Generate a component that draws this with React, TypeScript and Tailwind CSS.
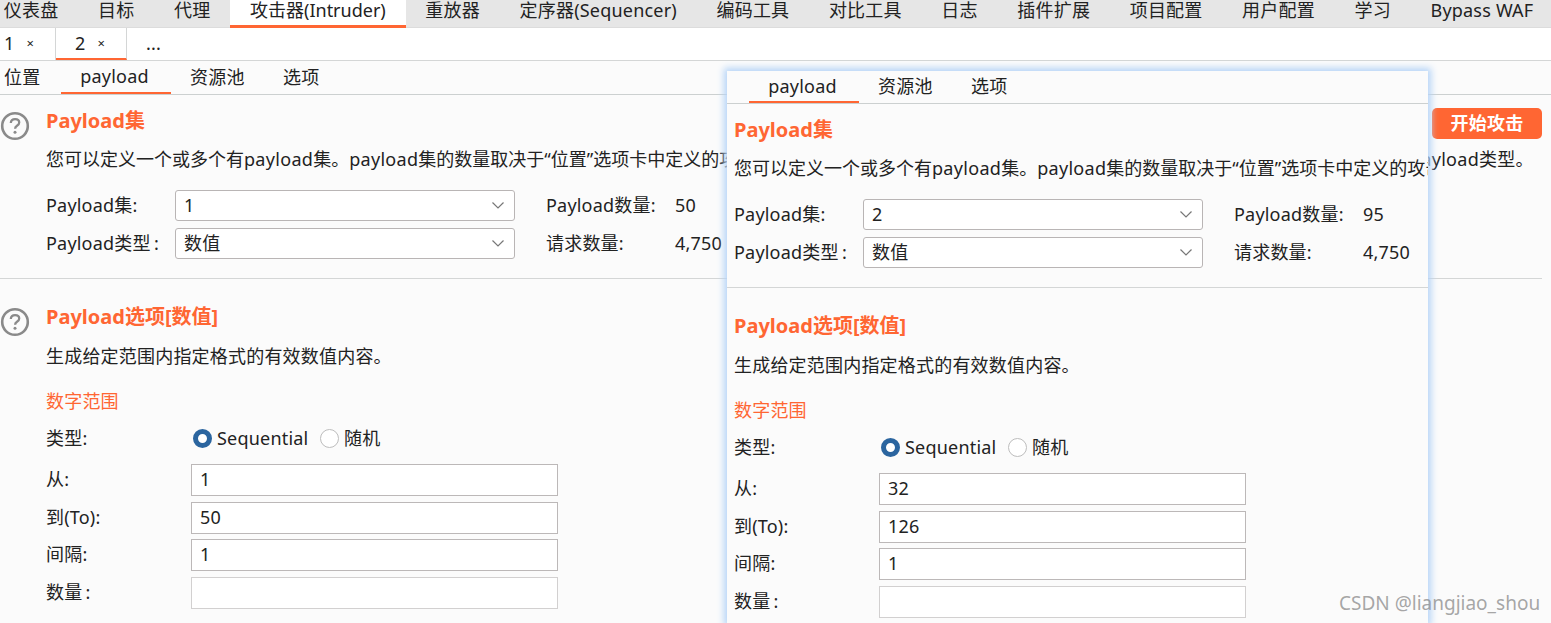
import React from "react";

const FONT = { fontFamily: '"Noto Sans", "Noto Sans CJK SC", sans-serif' };

const NAV: [string, boolean?][] = [
  ["仪表盘"], ["目标"], ["代理"], ["攻击器(Intruder)", true], ["重放器"], ["定序器(Sequencer)"],
  ["编码工具"], ["对比工具"], ["日志"], ["插件扩展"], ["项目配置"], ["用户配置"], ["学习"], ["Bypass WAF"],
];

function Help() {
  return (
    <svg width="30" height="30" viewBox="0 0 30 30" className="shrink-0" fill="none" stroke="#8a8a8a">
      <circle cx="15" cy="15" r="12.8" strokeWidth="2.6" />
      <path d="M10.8 12c.2-2.6 2-3.9 4.3-3.9 2.4 0 4.1 1.4 4.1 3.4 0 1.7-1 2.5-2.2 3.3-1.2.8-1.9 1.4-1.9 2.9" strokeWidth="2.3" />
      <circle cx="15" cy="21.2" r="1.5" fill="#8a8a8a" stroke="none" />
    </svg>
  );
}

function Chevron() {
  return (
    <svg width="14" height="9" viewBox="0 0 14 9" fill="none" stroke="#777" strokeWidth="1.2" className="mr-[9px] shrink-0">
      <path d="M1.5 1.5 7 7l5.5-5.5" />
    </svg>
  );
}

function Select({ value }: { value: string }) {
  return (
    <div className="flex h-[31px] w-[340px] items-center justify-between rounded-[3px] border border-[#b9b5b5] bg-white pl-2">
      <span className="pb-[2px]">{value}</span>
      <Chevron />
    </div>
  );
}

function Field({ label, value, faint }: { label: string; value?: string; faint?: boolean }) {
  return (
    <div className="flex h-[32px] items-center">
      <span className="w-[145px] shrink-0 pb-[2px]">{label}</span>
      <div className={`flex h-[32px] w-[367px] items-center border-[1.5px] bg-white pb-[2px] pl-2 ${faint ? "border-[#d2d0d0]" : "border-[#bcb8b8]"}`}>
        {value}
      </div>
    </div>
  );
}

function Radio({ on }: { on?: boolean }) {
  return on ? (
    <span className="block h-[19px] w-[19px] rounded-full border-[5px] border-[#2b659f] bg-white" />
  ) : (
    <span className="block h-[19px] w-[19px] rounded-full border border-[#bdbdbd] bg-white" />
  );
}

function Tabs({ compact }: { compact?: boolean }) {
  return (
    <div className={`flex items-center border-b border-[#ccd0d0] ${compact ? "h-[33px] pl-[22px]" : "h-[34px]"}`}>
      {!compact && <span className="ml-1 w-[57px] pb-[2px]">位置</span>}
      <span className="flex h-full w-[110px] items-center justify-center border-b-2 border-[#ff6633] pb-[1px] pr-[3px]">payload</span>
      <span className="ml-[19px] w-[93px] pb-[2px]">资源池</span>
      <span className="pb-[2px]">选项</span>
    </div>
  );
}

function Content({ set, count, from, to, overlay }: { set: string; count: string; from: string; to: string; overlay?: boolean }) {
  const pay = <span className="tracking-[0.3px]">payload</span>;
  return (
    <div>
      <div className={overlay ? "pl-[7px]" : "flex"}>
        {!overlay && <div className="w-[46px] pt-[16px]"><Help /></div>}
        <div className="min-w-0 flex-1 overflow-visible">
          <h2 className="pt-[12px] text-[20px] font-bold leading-[27px] tracking-normal text-[#ff6633]">Payload集</h2>
          <p className="mt-[13px] whitespace-nowrap leading-[24px] tracking-normal">
            您可以定义一个或多个有{pay}集。{pay}集的数量取决于“位置”选项卡中定义的攻<span className="tracking-[0.25px]">击类型。每个{pay}集可以使用多种{pay}类型,并且可以用不同的方式定制每种{pay}类型。</span>
          </p>
          <div className="mt-[19px] flex flex-col gap-[7px]">
            <div className="flex items-center">
              <span className="w-[129px] pb-[2px]">Payload集:</span>
              <Select value={set} />
              <span className="ml-[31px] w-[129px] pb-[2px]">Payload数量:</span>
              <span className="pb-[2px]">{count}</span>
            </div>
            <div className="flex items-center">
              <span className="w-[129px] pb-[2px]">Payload类型{"\u2009"}:</span>
              <Select value="数值" />
              <span className="ml-[31px] w-[129px] pb-[2px]">请求数量:</span>
              <span className="pb-[2px]">4,750</span>
            </div>
          </div>
        </div>
      </div>
      <div className={`mt-[19px] h-px bg-[#d4d6d6] ${overlay ? "" : "mr-[9px]"}`} />
      <div className={overlay ? "pl-[7px]" : "flex"}>
        {!overlay && <div className="w-[46px] pt-[28px]"><Help /></div>}
        <div className="min-w-0 flex-1">
          <h2 className="pt-[24px] text-[20px] font-bold leading-[27px] tracking-normal text-[#ff6633]">Payload选项[数值]</h2>
          <p className="mt-[14px] leading-[24px]">生成给定范围内指定格式的有效数值内容。</p>
          <div className="mt-[21px] leading-[24px] text-[#ff6633]">数字范围</div>
          <div className="mt-[13px] flex h-[24px] items-center">
            <span className="w-[147px]">类型:</span>
            <Radio on />
            <span className="ml-[5px] w-[91px]">Sequential</span>
            <span className="ml-[12px]"><Radio /></span>
            <span className="ml-[5px]">随机</span>
          </div>
          <div className="mt-[14px] flex flex-col gap-[5.5px]">
            <Field label="从:" value={from} />
            <Field label="到(To):" value={to} />
            <Field label="间隔:" value="1" />
            <Field label={"数量\u2009:"} faint />
          </div>
        </div>
      </div>
    </div>
  );
}

export default function App() {
  return (
    <div style={FONT} className="relative h-[623px] w-[1551px] overflow-hidden bg-[#fbfbfb] text-[18px] leading-[24px] tracking-[0.2px] text-[#222]">
      <nav className="flex h-[28px] border-b border-[#dcdcdc] bg-[#e6e6e6] leading-[20px]">
        {NAV.map(([label, active], i) => (
          <span
            key={label}
            className={`shrink-0 whitespace-nowrap px-[19.8px] ${i === 0 ? "ml-[-16px]" : ""} ${active ? "h-[28px] border-b-[3px] border-[#ff6633] bg-white tracking-normal" : ""}`}
          >
            {label}
          </span>
        ))}
      </nav>
      <div className="flex h-[33px] items-stretch border-b border-[#d4d6d6] bg-white">
        <span className="flex w-[56px] items-center border-r border-[#d4d6d6] pb-[3px] pl-1">1<span className="ml-[12px] text-[13px]">×</span></span>
        <span className="flex w-[71px] items-center border-r border-b-2 border-r-[#d4d6d6] border-b-[#ff6633] pb-[1px] pl-[19px]">2<span className="ml-[12px] text-[13px]">×</span></span>
        <span className="flex w-[53px] items-center pb-[3px] pl-[19px]">...</span>
      </div>
      <Tabs />
      <Content set="1" count="50" from="1" to="50" />

      <button className="absolute left-[1432px] top-[108px] h-[31px] w-[110px] rounded-[5px] bg-[#ff6633] pb-[2px] font-bold text-white">
        开始攻击
      </button>

      <section className="absolute bottom-0 left-[727px] top-[71px] w-[701px] overflow-hidden bg-[#fbfbfb] shadow-[0_0_7px_3px_#b5d4f7]">
        <Tabs compact />
        <Content set="2" count="95" from="32" to="126" overlay />
      </section>

      <div className="absolute left-[1339px] top-[591px] text-[19px] tracking-normal text-[#8f8f8f]/80">CSDN @liangjiao_shou</div>
    </div>
  );
}
